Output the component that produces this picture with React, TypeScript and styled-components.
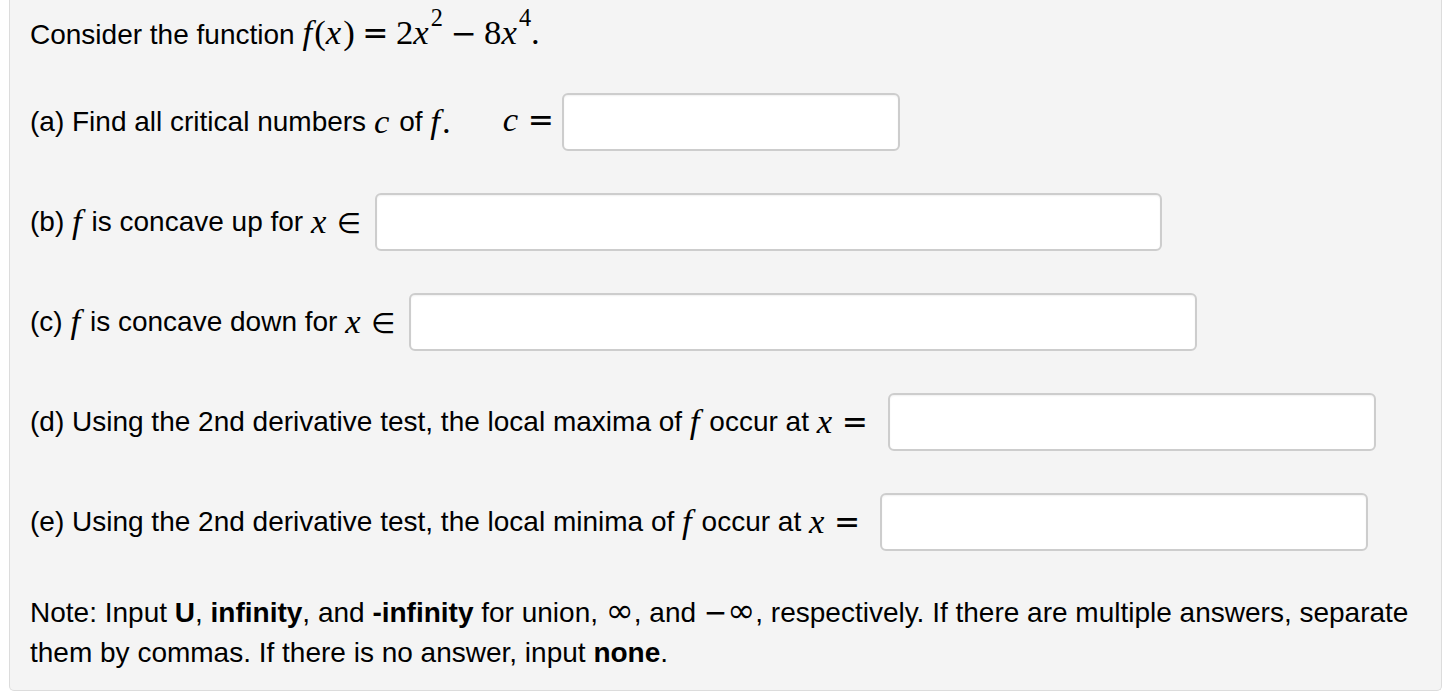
import React, { FC } from 'react'
import styled, { createGlobalStyle } from 'styled-components'

const GlobalStyle = createGlobalStyle`
    body {
        margin: 0;
        background: #ffffff;
        font-family: "Liberation Sans", Arial, sans-serif;
        color: #000;
    }
`;

const Panel = styled.div`
    margin: 0 2px 0 9px;
    padding: 15px 10px 17px 20px;
    background: #f4f4f4;
    border: 1px solid #dcdcdc;
    border-top: none;
    border-radius: 0 0 5px 5px;
    font-size: 28px;
    line-height: 40px;
`;

const Intro = styled.p`
    margin: 0 0 38px 0;
`;

const Row = styled.div`
    display: flex;
    align-items: center;
    height: 58px;
    margin-bottom: 42px;
    white-space: nowrap;
`;

const Answer = styled.input<{ $width: number; $gap?: number }>`
    box-sizing: border-box;
    width: ${p => p.$width}px;
    height: 58px;
    margin-left: ${p => p.$gap ?? 10}px;
    background: #ffffff;
    border: 2px solid #cdcdcd;
    border-radius: 6px;
    box-shadow: inset 0 1px 2px rgba(0, 0, 0, 0.06);
    outline: none;
`;

const Lead = styled.span<{ $gap: number }>`
    margin-left: ${p => p.$gap}px;
`;

const Note = styled.p`
    margin: 1px 0 0 0;
`;

const MathText = styled.span`
    font-family: "Liberation Serif", "Times New Roman", serif;
    font-size: 1.24em;
    line-height: 1;
`;

const V = styled.i`
    font-style: italic;
    margin-right: 0.06em;
`;

const Op = styled.span`
    font-family: "DejaVu Sans", sans-serif;
    font-size: 0.9em;
    margin: 0 0.24em;
`;

const Member = styled.span`
    font-family: "DejaVu Sans", sans-serif;
    font-size: 0.8em;
    margin-left: 0.3em;
`;

const Inf = styled.span`
    font-family: "DejaVu Sans", sans-serif;
    font-size: 1.2em;
    line-height: 1;
`;

const Minus = styled.span`
    font-family: "DejaVu Sans", sans-serif;
`;

const Sup = styled.sup`
    font-size: 0.7em;
    vertical-align: 0.75em;
    line-height: 0;
`;

const App: FC = () => {
    return (
        <>
            <GlobalStyle />
            <Panel>
                <Intro>
                    Consider the function{' '}
                    <MathText>
                        <V>f</V>(<V>x</V>)<Op>=</Op>2<V>x</V><Sup>2</Sup><Op>−</Op>8<V>x</V><Sup>4</Sup>.
                    </MathText>
                </Intro>

                <Row>
                    (a) Find all critical numbers&nbsp;<MathText><V>c</V></MathText>&nbsp;of&nbsp;<MathText><V>f</V>.</MathText>
                    <Lead $gap={52}>
                        <MathText><V>c</V><Op>=</Op></MathText>
                    </Lead>
                    <Answer $width={338} $gap={1} />
                </Row>

                <Row>
                    (b)&nbsp;<MathText><V>f</V></MathText>&nbsp;is concave up for&nbsp;<MathText><V>x</V><Member>∈</Member></MathText>
                    <Answer $width={787} $gap={14} />
                </Row>

                <Row>
                    (c)&nbsp;<MathText><V>f</V></MathText>&nbsp;is concave down for&nbsp;<MathText><V>x</V><Member>∈</Member></MathText>
                    <Answer $width={788} $gap={14} />
                </Row>

                <Row>
                    (d) Using the 2nd derivative test, the local maxima of&nbsp;<MathText><V>f</V></MathText>&nbsp;occur at&nbsp;
                    <MathText><V>x</V><Op>=</Op></MathText>
                    <Answer $width={488} $gap={13} />
                </Row>

                <Row>
                    (e) Using the 2nd derivative test, the local minima of&nbsp;<MathText><V>f</V></MathText>&nbsp;occur at&nbsp;
                    <MathText><V>x</V><Op>=</Op></MathText>
                    <Answer $width={488} $gap={12} />
                </Row>

                <Note>
                    Note: Input <b>U</b>, <b>infinity</b>, and <b>-infinity</b> for union, <Inf>∞</Inf>, and{' '}
                    <Minus>−</Minus><Inf>∞</Inf>, respectively. If there are multiple answers, separate them by commas. If there is no answer, input <b>none</b>.
                </Note>
            </Panel>
        </>
    )
}

export default App
